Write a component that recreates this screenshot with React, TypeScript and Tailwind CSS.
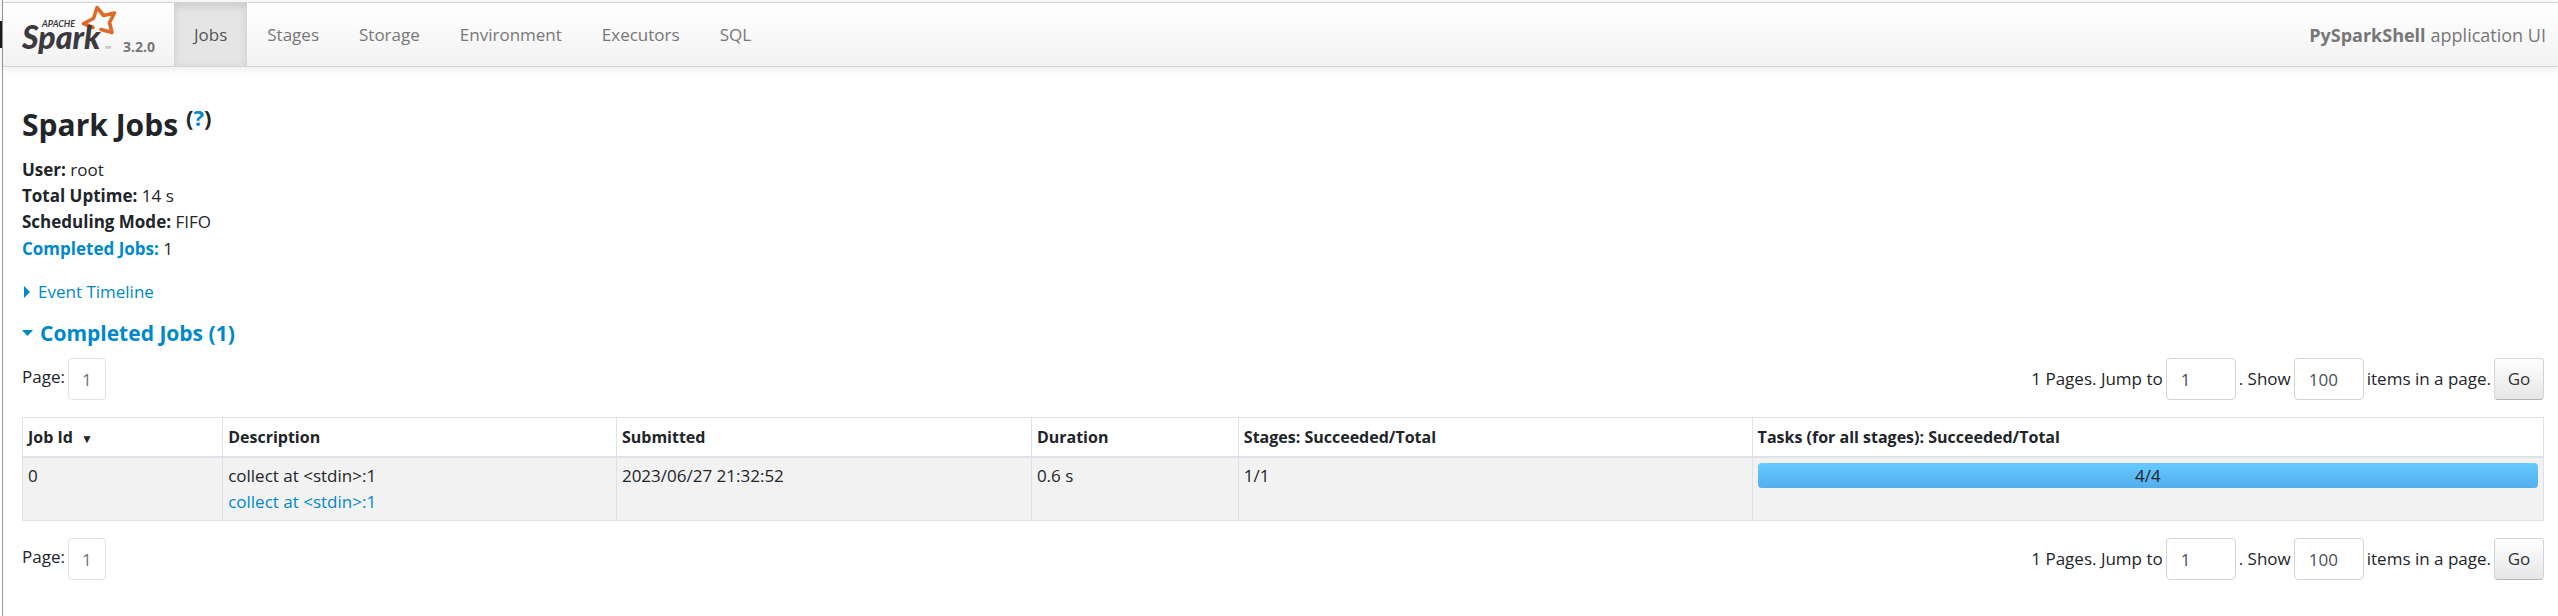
const tabs = ["Jobs", "Stages", "Storage", "Environment", "Executors", "SQL"];

const summary = [
  ["User:", "root"],
  ["Total Uptime:", "14 s"],
  ["Scheduling Mode:", "FIFO"],
];

function SparkLogo() {
  return (
    <svg width="96" height="56" viewBox="0 0 96 56" className="shrink-0" role="img" aria-label="Apache Spark">
      <path
        d="M71 24.5 L61.5 20.5 L71.5 15.5 L75 4.5 L81.5 12.5 L92.5 10 L87.5 19.5 L90 29.5 L79 26.5"
        fill="none"
        stroke="#dd6a2a"
        strokeWidth="3.6"
        strokeLinejoin="round"
        strokeLinecap="round"
      />
      <text x="0" y="46" fill="#3c3a3e" fontFamily="Lato, sans-serif" fontStyle="italic" fontWeight="900" fontSize="32">
        Spark
      </text>
      <text x="20" y="24" fill="#3c3a3e" fontFamily="Lato, sans-serif" fontStyle="italic" fontWeight="700" fontSize="9">
        APACHE
      </text>
      <text x="83" y="46" fill="#777" fontFamily="Lato, sans-serif" fontSize="4">
        TM
      </text>
    </svg>
  );
}

function Pager({ id }: { id: string }) {
  const field = "h-[42px] rounded border border-[#ced4da] bg-white px-[14px] text-[17px] text-[#495057]";
  return (
    <form className="flex items-start justify-between" onSubmit={(e) => e.preventDefault()}>
      <div className="flex gap-[3px]">
        <span className="leading-[38px]">Page:</span>
        <button
          type="button"
          className="h-[42px] w-[38px] rounded border border-[#dee2e6] bg-white pt-0.5 text-[#6c757d]"
        >
          1
        </button>
      </div>
      <div className="flex items-center gap-[3px]">
        <label htmlFor={id + "-page"}>1 Pages. Jump to</label>
        <input id={id + "-page"} defaultValue="1" className={field + " w-[70px]"} />
        <label htmlFor={id + "-size"}>. Show</label>
        <input id={id + "-size"} defaultValue="100" className={field + " w-[70px]"} />
        <span>items in a page.</span>
        <button
          type="submit"
          className="h-[42px] w-[50px] rounded border border-[#ced4da] border-b-[#b3b3b3] bg-linear-to-b from-white to-[#e6e6e6] text-[#333]"
        >
          Go
        </button>
      </div>
    </form>
  );
}

export default function App() {
  const cell = "border border-[#dee2e6] px-[5px] text-left align-top";
  const head = cell + " pt-[6px] text-base leading-[26px]";
  return (
    <div className="flex min-h-screen bg-white font-['Open_Sans',sans-serif] text-[17px] leading-[26px] text-[#212529]">
      <div className="w-[3px] shrink-0 border-r border-[#999] pt-[21px]">
        <div className="h-[27px] bg-[#1c1c1c]" />
      </div>
      <div className="min-w-0 grow pt-[2px]">
        <header className="flex h-[65px] items-stretch border-y border-[#d4d4d4] bg-linear-to-b from-white to-[#f2f2f2] pr-3 pl-[19px] text-[#777] shadow-[0_1px_10px_rgba(0,0,0,0.1)]">
          <a href="#home" className="flex w-[152px] shrink-0 items-start gap-[5px]">
            <SparkLogo />
            <span className="pt-[31px] text-sm leading-[26px] font-bold">3.2.0</span>
          </a>
          <nav className="flex">
            {tabs.map((tab, i) => (
              <a
                key={tab}
                href={"#" + tab.toLowerCase()}
                className={
                  i === 0
                    ? "flex items-center bg-[#e5e5e5] px-5 text-[#555] shadow-[inset_0_3px_8px_rgba(0,0,0,0.125)]"
                    : "flex items-center px-5"
                }
              >
                {tab}
              </a>
            ))}
          </nav>
          <p className="ml-auto flex items-center gap-[5px] text-lg">
            <strong>PySparkShell</strong> application UI
          </p>
        </header>

        <main className="pr-[14px] pl-[19px]">
          <h1 className="flex gap-2 pt-[38px] text-[30px] leading-10 font-bold">
            Spark Jobs
            <sup className="top-0 text-[22px] leading-6">
              (
              <a href="#help" className="text-[#0088cc]">
                ?
              </a>
              )
            </sup>
          </h1>
          <ul className="pt-3">
            {summary.map(([label, value]) => (
              <li key={label}>
                <strong>{label}</strong> {value}
              </li>
            ))}
            <li className="pt-px">
              <a href="#completed" className="font-bold text-[#0088cc]">
                Completed Jobs:
              </a>{" "}
              1
            </li>
          </ul>

          <a href="#timeline" className="mt-[17px] flex items-center gap-2 pl-[2px] text-[#0088cc]">
            <svg width="6" height="12" viewBox="0 0 6 12" aria-hidden="true">
              <path d="M0 0 L6 6 L0 12 Z" fill="currentColor" />
            </svg>
            Event Timeline
          </a>
          <h2 id="completed" className="pt-[15px] text-[21px] font-bold">
            <a href="#completed" className="flex items-center gap-[7px] text-[#0088cc]">
              <svg width="11" height="6" viewBox="0 0 11 6" aria-hidden="true">
                <path d="M0 0 H11 L5.5 6 Z" fill="currentColor" />
              </svg>
              Completed Jobs (1)
            </a>
          </h2>

          <div className="pt-3">
            <Pager id="top" />
          </div>
          <table className="my-[17px] w-full table-fixed border-collapse">
            <colgroup>
              <col className="w-[7.94%]" />
              <col className="w-[15.62%]" />
              <col className="w-[16.46%]" />
              <col className="w-[8.21%]" />
              <col className="w-[20.38%]" />
              <col />
            </colgroup>
            <thead>
              <tr className="h-[39px] border-b-2 border-[#dee2e6]">
                <th className={head}>
                  Job Id <span className="pl-1 text-xs leading-none">▼</span>
                </th>
                <th className={head}>Description</th>
                <th className={head}>Submitted</th>
                <th className={head}>Duration</th>
                <th className={head}>Stages: Succeeded/Total</th>
                <th className={head}>Tasks (for all stages): Succeeded/Total</th>
              </tr>
            </thead>
            <tbody>
              <tr className="h-16 bg-[#f2f2f2]">
                <td className={cell + " pt-[5px]"}>0</td>
                <td className={cell + " pt-[5px]"}>
                  collect at &lt;stdin&gt;:1
                  <a href="#job-0" className="block text-[#0088cc]">
                    collect at &lt;stdin&gt;:1
                  </a>
                </td>
                <td className={cell + " pt-[5px]"}>2023/06/27 21:32:52</td>
                <td className={cell + " pt-[5px]"}>0.6 s</td>
                <td className={cell + " pt-[5px]"}>1/1</td>
                <td className={cell + " pt-[5px]"}>
                  <div className="h-[25px] rounded bg-linear-to-b from-[#64caff] to-[#54aeed] text-center">4/4</div>
                </td>
              </tr>
            </tbody>
          </table>
          <Pager id="bottom" />
        </main>
      </div>
    </div>
  );
}
